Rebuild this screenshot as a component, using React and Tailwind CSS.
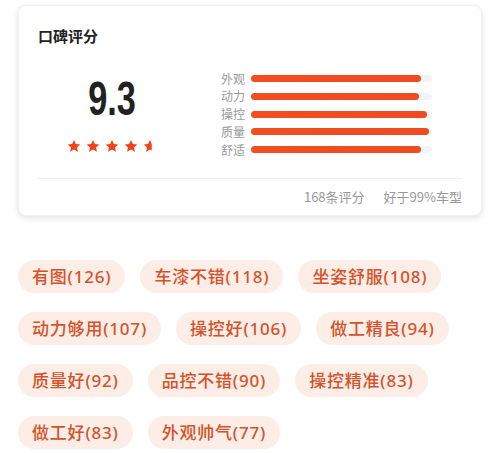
const aspects = [
  { name: '外观', value: 94 },
  { name: '动力', value: 93 },
  { name: '操控', value: 97.5 },
  { name: '质量', value: 98.5 },
  { name: '舒适', value: 94 },
]

const tags = [
  '有图(126)',
  '车漆不错(118)',
  '坐姿舒服(108)',
  '动力够用(107)',
  '操控好(106)',
  '做工精良(94)',
  '质量好(92)',
  '品控不错(90)',
  '操控精准(83)',
  '做工好(83)',
  '外观帅气(77)',
]

function Star({ half }) {
  return (
    <svg width="14" height="14" viewBox="0 0 24 24">
      <defs>
        <clipPath id="halfclip">
          <rect x="0" y="0" width="15" height="24" />
        </clipPath>
      </defs>
      <path
        d="M12 1.5l3.2 6.9 7.5.9-5.5 5.1 1.5 7.4L12 18.1l-6.7 3.7 1.5-7.4L1.3 9.3l7.5-.9z"
        fill="#f0421c"
        clipPath={half ? 'url(#halfclip)' : undefined}
      />
    </svg>
  )
}

export default function App() {
  return (
    <div className="w-[500px] h-[453px] bg-white overflow-hidden font-['Noto_Sans_CJK_SC',sans-serif]">
      <div className="ml-[18px] mt-[5px] w-[464px] h-[211px] rounded-lg bg-white border border-[#f0f0f0] shadow-[0_2px_6px_rgba(0,0,0,0.12)] px-[19px] pt-[22px]">
        <div className="text-[15px] leading-[16px] font-bold text-[#222]">口碑评分</div>
        <div className="flex mt-[30px] h-[100px]">
          <div className="w-[148px] flex flex-col items-center">
            <div className="font-['Liberation_Sans',sans-serif] font-bold text-[49px] leading-none text-[#222] scale-x-[0.7]">
              9.3
            </div>
            <div className="flex gap-[5px] mt-[16px]">
              <Star />
              <Star />
              <Star />
              <Star />
              <Star half />
            </div>
          </div>
          <div className="ml-[35px] flex flex-col gap-[4.75px] mt-[-2px]">
            {aspects.map((a) => (
              <div key={a.name} className="flex items-center h-[13px]">
                <span className="w-[30px] text-[12px] leading-none text-[#999]">{a.name}</span>
                <div className="w-[181px] h-[7px] rounded-full bg-[#f3f3f5]">
                  <div
                    className="h-full rounded-full bg-gradient-to-r from-[#f34e20] to-[#ef4a22]"
                    style={{ width: a.value + '%' }}
                  />
                </div>
              </div>
            ))}
          </div>
        </div>
        <div className="h-px bg-[#f0f0f0] mt-[4px]" />
        <div className="flex justify-end gap-[19px] mt-[10px] text-[13px] leading-[16px] text-[#999]">
          <span>168条评分</span>
          <span>好于99%车型</span>
        </div>
      </div>
      <div className="flex flex-wrap gap-x-[15px] gap-y-[19px] px-[18px] mt-[44px]">
        {tags.map((t) => (
          <div
            key={t}
            className="h-[33px] px-[14px] rounded-full bg-[#fcede7] text-[#d4522a] text-[17px] font-medium tracking-[0.8px] tabular-nums font-['Noto_Sans','Noto_Sans_CJK_SC',sans-serif] flex items-center"
          >
            {t}
          </div>
        ))}
      </div>
    </div>
  )
}
